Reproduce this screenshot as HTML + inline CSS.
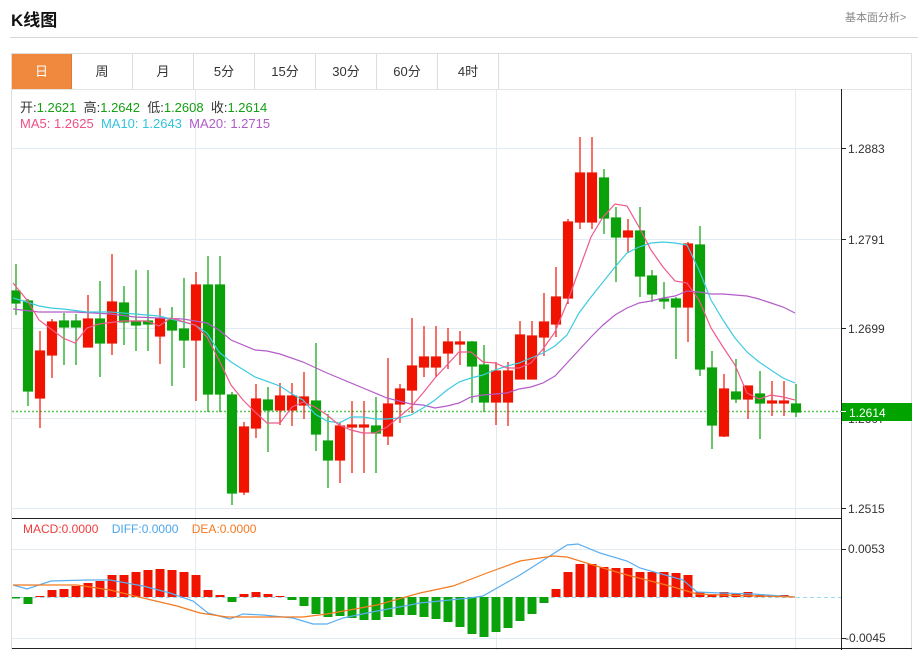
<!DOCTYPE html>
<html><head><meta charset="utf-8"><style>
*{margin:0;padding:0;box-sizing:border-box}
body{width:918px;height:652px;background:#fff;font-family:"Liberation Sans","Noto Sans CJK SC",sans-serif;position:relative;overflow:hidden;color:#333}
.t{position:absolute;white-space:nowrap}
.tab{position:absolute;top:54px;height:35px;width:61px;border-right:1px solid #ddd;text-align:center;line-height:35px;font-size:13px;color:#333}
</style></head><body>
<div class="t" style="left:11px;top:6px;font-size:17px;font-weight:bold;color:#111">K线图</div>
<div class="t" style="left:845px;top:9px;font-size:11px;color:#888">基本面分析&gt;</div>
<div style="position:absolute;left:10px;top:37px;width:908px;height:1px;background:#d6d6d6"></div>
<div style="position:absolute;left:11px;top:53px;width:901px;height:597px;border:1px solid #ddd;border-bottom:none"></div>
<div style="position:absolute;left:12px;top:89px;width:899px;height:1px;background:#e4e4e4"></div>
<div class="tab" style="left:12px;width:60px;background:#f0893d;color:#fff;border-right:1px solid #e07a30">日</div>
<div class="tab" style="left:72px">周</div>
<div class="tab" style="left:133px">月</div>
<div class="tab" style="left:194px">5分</div>
<div class="tab" style="left:255px">15分</div>
<div class="tab" style="left:316px">30分</div>
<div class="tab" style="left:377px">60分</div>
<div class="tab" style="left:438px">4时</div>
<svg width="918" height="652" style="position:absolute;left:0;top:0" xmlns="http://www.w3.org/2000/svg">
<g stroke="#e3ebf2" stroke-width="1">
<line x1="12" y1="148.5" x2="841" y2="148.5"/><line x1="12" y1="239.5" x2="841" y2="239.5"/><line x1="12" y1="328.5" x2="841" y2="328.5"/><line x1="12" y1="418.5" x2="841" y2="418.5"/><line x1="12" y1="508.5" x2="841" y2="508.5"/>
<line x1="12" y1="549.5" x2="841" y2="549.5"/><line x1="12" y1="638.5" x2="841" y2="638.5"/>
<line x1="195.5" y1="90" x2="195.5" y2="650"/><line x1="496.5" y1="90" x2="496.5" y2="650"/><line x1="795.5" y1="90" x2="795.5" y2="650"/>
</g>
<line x1="12" y1="411.5" x2="841" y2="411.5" stroke="#5cc85c" stroke-width="1.5" stroke-dasharray="2,2"/>
<line x1="12" y1="597.5" x2="841" y2="597.5" stroke="#9ed8ee" stroke-dasharray="4,3"/>
<g stroke-width="1.2" id="c">
<g stroke="#0aa10a" fill="#0aa10a">
<line x1="16" y1="264" x2="16" y2="315"/><rect x="12" y="291" width="8" height="12"/>
<line x1="28" y1="299" x2="28" y2="406"/><rect x="23.5" y="301" width="9" height="90"/>
<line x1="64" y1="313" x2="64" y2="365"/><rect x="59.5" y="321" width="9" height="6"/>
<line x1="76" y1="314" x2="76" y2="365"/><rect x="71.5" y="321" width="9" height="6"/>
<line x1="100" y1="281" x2="100" y2="377"/><rect x="95.5" y="319" width="9" height="24"/>
<line x1="124" y1="286" x2="124" y2="345"/><rect x="119.5" y="303" width="9" height="19"/>
<line x1="136" y1="270" x2="136" y2="351"/><rect x="131.5" y="321" width="9" height="4"/>
<line x1="148" y1="270" x2="148" y2="351"/><rect x="143.5" y="321" width="9" height="3"/>
<line x1="172" y1="307" x2="172" y2="386"/><rect x="167.5" y="320" width="9" height="10"/>
<line x1="184" y1="278" x2="184" y2="368"/><rect x="179.5" y="329" width="9" height="11"/>
<line x1="208" y1="256" x2="208" y2="412"/><rect x="203.5" y="285" width="9" height="109"/>
<line x1="220" y1="256" x2="220" y2="412"/><rect x="215.5" y="285" width="9" height="109"/>
<line x1="232" y1="392" x2="232" y2="505"/><rect x="227.5" y="395" width="9" height="98"/>
<line x1="268" y1="387" x2="268" y2="452"/><rect x="263.5" y="400" width="9" height="10"/>
<line x1="316" y1="343" x2="316" y2="451"/><rect x="311.5" y="401" width="9" height="33"/>
<line x1="328" y1="414" x2="328" y2="488"/><rect x="323.5" y="441" width="9" height="19"/>
<line x1="376" y1="397" x2="376" y2="473"/><rect x="371.5" y="426" width="9" height="7"/>
<line x1="472" y1="341" x2="472" y2="403"/><rect x="467.5" y="342" width="9" height="24"/>
<line x1="484" y1="345" x2="484" y2="412"/><rect x="479.5" y="365" width="9" height="37"/>
<line x1="604" y1="169" x2="604" y2="234"/><rect x="599.5" y="178" width="9" height="40"/>
<line x1="616" y1="207" x2="616" y2="282"/><rect x="611.5" y="218" width="9" height="19"/>
<line x1="640" y1="207" x2="640" y2="297"/><rect x="635.5" y="231" width="9" height="45"/>
<line x1="652" y1="270" x2="652" y2="302"/><rect x="647.5" y="276" width="9" height="18"/>
<line x1="664" y1="282" x2="664" y2="309"/><rect x="659.5" y="299" width="9" height="2"/>
<line x1="676" y1="297" x2="676" y2="359"/><rect x="671.5" y="299" width="9" height="8"/>
<line x1="700" y1="226" x2="700" y2="376"/><rect x="695.5" y="245" width="9" height="124"/>
<line x1="712" y1="351" x2="712" y2="449"/><rect x="707.5" y="368" width="9" height="57"/>
<line x1="736" y1="359" x2="736" y2="403"/><rect x="731.5" y="392" width="9" height="7"/>
<line x1="760" y1="371" x2="760" y2="439"/><rect x="755.5" y="394" width="9" height="9"/>
<line x1="796" y1="384" x2="796" y2="417"/><rect x="791.5" y="404" width="9" height="8"/>
</g>
<g stroke="#f01400" fill="#f01400">
<line x1="40" y1="331" x2="40" y2="428"/><rect x="35.5" y="351" width="9" height="47"/>
<line x1="52" y1="319" x2="52" y2="378"/><rect x="47.5" y="322" width="9" height="33"/>
<line x1="88" y1="295" x2="88" y2="347"/><rect x="83.5" y="319" width="9" height="28"/>
<line x1="112" y1="254" x2="112" y2="355"/><rect x="107.5" y="302" width="9" height="41"/>
<line x1="160" y1="308" x2="160" y2="364"/><rect x="155.5" y="319" width="9" height="17"/>
<line x1="196" y1="272" x2="196" y2="401"/><rect x="191.5" y="285" width="9" height="55"/>
<line x1="244" y1="422" x2="244" y2="495"/><rect x="239.5" y="427" width="9" height="65"/>
<line x1="256" y1="384" x2="256" y2="438"/><rect x="251.5" y="399" width="9" height="29"/>
<line x1="280" y1="383" x2="280" y2="425"/><rect x="275.5" y="396" width="9" height="14"/>
<line x1="292" y1="383" x2="292" y2="426"/><rect x="287.5" y="396" width="9" height="14"/>
<line x1="304" y1="372" x2="304" y2="419"/><rect x="299.5" y="397" width="9" height="8"/>
<line x1="340" y1="423" x2="340" y2="483"/><rect x="335.5" y="426" width="9" height="34"/>
<line x1="352" y1="401" x2="352" y2="473"/><rect x="347.5" y="425" width="9" height="2"/>
<line x1="364" y1="401" x2="364" y2="473"/><rect x="359.5" y="425" width="9" height="2"/>
<line x1="388" y1="358" x2="388" y2="445"/><rect x="383.5" y="404" width="9" height="32"/>
<line x1="400" y1="384" x2="400" y2="423"/><rect x="395.5" y="389" width="9" height="15"/>
<line x1="412" y1="318" x2="412" y2="413"/><rect x="407.5" y="366" width="9" height="24"/>
<line x1="424" y1="326" x2="424" y2="377"/><rect x="419.5" y="357" width="9" height="10"/>
<line x1="436" y1="326" x2="436" y2="377"/><rect x="431.5" y="357" width="9" height="10"/>
<line x1="448" y1="328" x2="448" y2="369"/><rect x="443.5" y="342" width="9" height="11"/>
<line x1="460" y1="331" x2="460" y2="365"/><rect x="455.5" y="342" width="9" height="2"/>
<line x1="496" y1="362" x2="496" y2="425"/><rect x="491.5" y="371" width="9" height="31"/>
<line x1="508" y1="362" x2="508" y2="426"/><rect x="503.5" y="371" width="9" height="31"/>
<line x1="520" y1="321" x2="520" y2="379"/><rect x="515.5" y="335" width="9" height="44"/>
<line x1="532" y1="321" x2="532" y2="379"/><rect x="527.5" y="336" width="9" height="43"/>
<line x1="544" y1="293" x2="544" y2="356"/><rect x="539.5" y="322" width="9" height="15"/>
<line x1="556" y1="267" x2="556" y2="337"/><rect x="551.5" y="297" width="9" height="27"/>
<line x1="568" y1="219" x2="568" y2="304"/><rect x="563.5" y="222" width="9" height="76"/>
<line x1="580" y1="137" x2="580" y2="229"/><rect x="575.5" y="173" width="9" height="49"/>
<line x1="592" y1="137" x2="592" y2="229"/><rect x="587.5" y="173" width="9" height="49"/>
<line x1="628" y1="219" x2="628" y2="253"/><rect x="623.5" y="231" width="9" height="6"/>
<line x1="688" y1="242" x2="688" y2="342"/><rect x="683.5" y="244" width="9" height="63"/>
<line x1="724" y1="374" x2="724" y2="437"/><rect x="719.5" y="389" width="9" height="47"/>
<line x1="748" y1="386" x2="748" y2="419"/><rect x="743.5" y="386" width="9" height="13"/>
<line x1="772" y1="381" x2="772" y2="416"/><rect x="767.5" y="401" width="9" height="2"/>
<line x1="784" y1="381" x2="784" y2="416"/><rect x="779.5" y="401" width="9" height="2"/>
</g></g>
<g fill="none" stroke-width="1.2">
<polyline stroke="#b45cc8" points="13,309 39,312 75,312 111,314 135,317 159,318 183,319 207,323 219,330 231,340 255,350 267,351 280,354 303,362 327,373 339,378 363,388 387,398 411,404 423,405 435,408 447,406 459,403 471,397 483,395 495,394 507,393 519,389 531,387 543,383 555,376 567,363 579,350 591,337 603,325 615,315 627,308 639,303 651,301 663,298 675,296 687,291 699,292 711,294 723,294 735,295 747,296 759,299 771,303 783,307 795,313"/>
<polyline stroke="#3ecbe0" points="13,298 27,302 39,306 51,308 63,309 87,312 111,312 135,314 159,316 183,322 195,325 207,333 219,352 231,362 255,377 280,386 292,394 303,400 315,414 327,421 339,423 351,417 363,417 375,419 387,419 399,418 411,415 423,408 435,400 447,390 459,382 471,378 483,375 495,370 507,366 519,363 531,358 543,353 555,346 567,335 579,313 591,297 603,282 615,267 627,253 639,247 651,243 663,242 675,243 687,245 699,270 711,300 723,320 735,338 747,352 759,362 771,370 783,378 795,383"/>
<polyline stroke="#ef5a8c" points="13,283 27,300 39,320 63,338 75,343 87,328 99,324 123,321 147,321 159,326 171,318 195,325 207,337 219,360 231,385 243,400 255,412 267,423 280,423 292,407 303,402 315,407 327,415 339,425 351,430 363,433 375,433 387,427 399,417 411,407 423,393 435,378 447,365 459,352 471,352 483,362 495,363 507,368 519,368 531,363 543,349 555,332 567,303 579,270 591,237 603,217 615,204 627,206 639,227 651,250 663,267 675,281 687,283 699,300 711,328 723,347 735,365 747,393 759,399 771,395 783,397 795,400"/>
</g>
<g>
<rect x="12" y="597" width="8" height="1.5" fill="#0aa10a"/>
<rect x="23.5" y="597" width="9" height="7" fill="#0aa10a"/>
<g fill="#f01400">
<rect x="35.5" y="596" width="9" height="1"/><rect x="47.5" y="590" width="9" height="7"/><rect x="59.5" y="589" width="9" height="8"/><rect x="71.5" y="586" width="9" height="11"/><rect x="83.5" y="583" width="9" height="14"/><rect x="95.5" y="581" width="9" height="16"/><rect x="107.5" y="575" width="9" height="22"/><rect x="119.5" y="575" width="9" height="22"/><rect x="131.5" y="572" width="9" height="25"/><rect x="143.5" y="570" width="9" height="27"/><rect x="155.5" y="569" width="9" height="28"/><rect x="167.5" y="570" width="9" height="27"/><rect x="179.5" y="572" width="9" height="25"/><rect x="191.5" y="575" width="9" height="22"/><rect x="203.5" y="590" width="9" height="7"/><rect x="215.5" y="595" width="9" height="2"/>
<rect x="239.5" y="594" width="9" height="3"/><rect x="251.5" y="592" width="9" height="5"/><rect x="263.5" y="594" width="9" height="3"/><rect x="275.5" y="596" width="9" height="1"/>
<rect x="551.5" y="589" width="9" height="8"/><rect x="563.5" y="572" width="9" height="25"/><rect x="575.5" y="564" width="9" height="33"/><rect x="587.5" y="564" width="9" height="33"/><rect x="599.5" y="567" width="9" height="30"/><rect x="611.5" y="568" width="9" height="29"/><rect x="623.5" y="568" width="9" height="29"/><rect x="635.5" y="572" width="9" height="25"/><rect x="647.5" y="572" width="9" height="25"/><rect x="659.5" y="572" width="9" height="25"/><rect x="671.5" y="573" width="9" height="24"/><rect x="683.5" y="575" width="9" height="22"/><rect x="695.5" y="592" width="9" height="5"/><rect x="707.5" y="594" width="9" height="3"/><rect x="719.5" y="592" width="9" height="5"/><rect x="731.5" y="593" width="9" height="4"/><rect x="743.5" y="592" width="9" height="5"/><rect x="755.5" y="595" width="9" height="2"/><rect x="767.5" y="595" width="9" height="2"/><rect x="779.5" y="595" width="9" height="2"/>
</g>
<g fill="#0aa10a">
<rect x="227.5" y="597" width="9" height="5"/>
<rect x="287.5" y="597" width="9" height="3"/><rect x="299.5" y="597" width="9" height="9"/><rect x="311.5" y="597" width="9" height="17"/><rect x="323.5" y="597" width="9" height="20"/><rect x="335.5" y="597" width="9" height="19"/><rect x="347.5" y="597" width="9" height="21"/><rect x="359.5" y="597" width="9" height="23"/><rect x="371.5" y="597" width="9" height="23"/><rect x="383.5" y="597" width="9" height="20"/><rect x="395.5" y="597" width="9" height="18"/><rect x="407.5" y="597" width="9" height="18"/><rect x="419.5" y="597" width="9" height="20"/><rect x="431.5" y="597" width="9" height="22"/><rect x="443.5" y="597" width="9" height="25"/><rect x="455.5" y="597" width="9" height="30"/><rect x="467.5" y="597" width="9" height="37"/><rect x="479.5" y="597" width="9" height="40"/><rect x="491.5" y="597" width="9" height="35"/><rect x="503.5" y="597" width="9" height="31"/><rect x="515.5" y="597" width="9" height="24"/><rect x="527.5" y="597" width="9" height="17"/><rect x="539.5" y="597" width="9" height="6"/>
</g></g>
<g fill="none" stroke-width="1.2">
<polyline stroke="#5aaef0" points="13,585 27,589 51,581 87,580 110,580 143,586 170,593 193,601 208,613 230,619 243,614 263,615 293,618 313,624 327,624 343,618 377,611 410,605 420,603 470,598 483,596 520,575 567,545 578,544 600,553 627,561 640,568 683,580 697,592 720,593 753,594 795,597"/>
<polyline stroke="#f47a20" points="13,585 43,585 77,585 110,590 143,598 177,606 200,613 227,617 277,617 303,617 327,614 377,605 420,593 453,586 487,573 520,561 553,556 567,557 593,565 627,575 670,586 697,594 720,595 795,597"/>
</g>
<line x1="12" y1="518.5" x2="841" y2="518.5" stroke="#222"/>
<line x1="12" y1="648.5" x2="912" y2="648.5" stroke="#222"/>
<line x1="841.5" y1="89" x2="841.5" y2="650" stroke="#222"/>
<g stroke="#222"><line x1="841" y1="148.5" x2="846" y2="148.5"/><line x1="841" y1="239.5" x2="846" y2="239.5"/><line x1="841" y1="328.5" x2="846" y2="328.5"/><line x1="841" y1="508.5" x2="846" y2="508.5"/><line x1="841" y1="549.5" x2="846" y2="549.5"/><line x1="841" y1="638.5" x2="846" y2="638.5"/></g>
<g font-family="Liberation Sans, sans-serif" font-size="12" fill="#333">
<text x="848" y="153">1.2883</text><text x="848" y="244">1.2791</text><text x="848" y="333">1.2699</text><text x="848" y="423">1.2607</text><text x="848" y="513">1.2515</text>
<text x="848" y="553">0.0053</text><text x="845" y="642">-0.0045</text>
</g>
<rect x="842" y="403" width="70" height="18" fill="#00a300"/>
<line x1="841" y1="411.5" x2="846" y2="411.5" stroke="#fff"/>
<text x="849" y="417" font-family="Liberation Sans, sans-serif" font-size="12" fill="#fff">1.2614</text>
</svg>
<div class="t" style="left:20px;top:97px;font-size:13px">开:<span style="color:#13a013">1.2621</span>&nbsp; 高:<span style="color:#13a013">1.2642</span>&nbsp; 低:<span style="color:#13a013">1.2608</span>&nbsp; 收:<span style="color:#13a013">1.2614</span></div>
<div class="t" style="left:20px;top:116px;font-size:13px"><span style="color:#ef4f86">MA5: 1.2625</span>&nbsp; <span style="color:#33c4dc">MA10: 1.2643</span>&nbsp; <span style="color:#b05cc8">MA20: 1.2715</span></div>
<div class="t" style="left:23px;top:522px;font-size:12px"><span style="color:#ef3b3b">MACD:0.0000</span>&nbsp;&nbsp;&nbsp; <span style="color:#4aa6ee">DIFF:0.0000</span>&nbsp;&nbsp;&nbsp; <span style="color:#f47a20">DEA:0.0000</span></div>
</body></html>
